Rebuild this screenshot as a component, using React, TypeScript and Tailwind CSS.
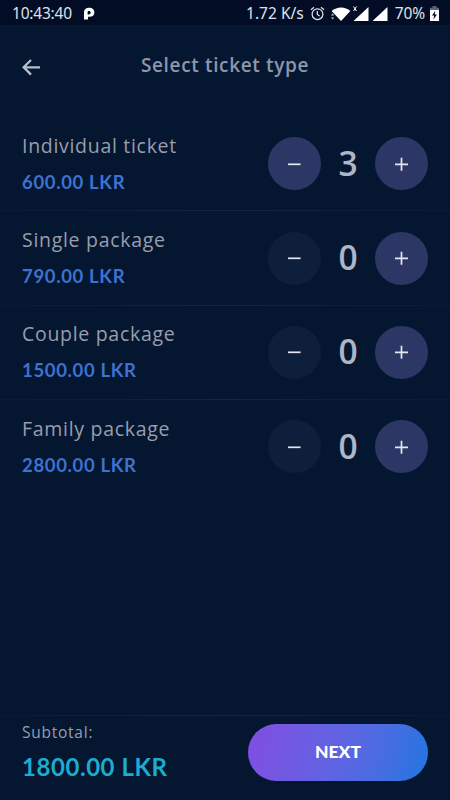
import { useState } from 'react'

interface Ticket {
  name: string
  price: number
  count: number
}

const initialTickets: Ticket[] = [
  { name: 'Individual ticket', price: 600, count: 3 },
  { name: 'Single package', price: 790, count: 0 },
  { name: 'Couple package', price: 1500, count: 0 },
  { name: 'Family package', price: 2800, count: 0 },
]

const formatPrice = (value: number) => `${value.toFixed(2)} LKR`

function StatusBar() {
  return (
    <div className="flex h-[25px] shrink-0 items-center bg-[#020d25] pl-3 pr-[11px] pt-[3px] font-['Noto_Sans',sans-serif] text-[15.5px] leading-none text-[#dfe3ea]">
      <span className="w-[61px] whitespace-nowrap tracking-[-0.2px]">10:43:40</span>
      <svg className="-mt-px ml-[10px] h-[13px] w-[12px]" viewBox="0 0 12 13">
        <path
          d="M1 5.2C1 2.4 3 .8 6 .8 9.4.8 11.4 2.7 11.4 5.4 11.4 8.2 9.4 9.8 6.6 9.8H5V12.6H1V7.6h4.8c1.2 0 1.8-.8 1.8-2S7 3.9 6 3.9 4.6 4.4 4.6 5.2v2.6H1z"
          fill="#fff"
        />
      </svg>
      <span className="ml-auto whitespace-nowrap">1.72 K/s</span>
      <svg className="-mt-0.5 ml-[6px] h-[15px] w-[15px]" viewBox="0 0 15 15" fill="none" stroke="#e4e8ef" strokeWidth="1.2">
        <circle cx="7.5" cy="8.2" r="5.4" />
        <path d="M7.3 5v3.5l2.4 1.4M1 3.7L4 1.2M14 3.7L11 1.2" />
      </svg>
      <svg className="-mt-0.5 ml-[6px] h-[15px] w-[58px]" viewBox="0 0 58 15" fill="#fff">
        <path d="M.6 5C5.9.2 14.3.2 19.4 5L10 15z" />
        <path d="M0 9.4l1.6-2.2 1.6 2.2zM0 11.4h3.2l-1.6 2.2z" fill="#b8bfca" />
        <path d="M37.5 1v14h-15zM56.5 1v14h-15z" />
        <path d="M22.5.5l3 4.5M25.5.5l-3 4.5" stroke="#fff" strokeWidth="1" />
      </svg>
      <span className="ml-[6px] whitespace-nowrap tracking-[-0.1px]">70%</span>
      <svg className="-mt-0.5 ml-[5px] h-[15px] w-[9px]" viewBox="0 0 9 15">
        <path d="M2.5 0h4v1.7H9V4H0V1.7h2.5z" fill="#5c6373" />
        <path d="M0 4h9v11H0z" fill="#fff" />
        <path d="M5.3 4.8L2 9.6h2.1l-.7 4L7 8.5H4.8z" fill="#020d25" />
      </svg>
    </div>
  )
}

function Divider() {
  return <div className="h-px shrink-0 bg-linear-to-r from-[#0a1b36] via-[#14253f] to-[#0a1b36]" />
}

interface CountButtonProps {
  kind: 'minus' | 'plus'
  disabled?: boolean
  onClick: () => void
}

function CountButton({ kind, disabled = false, onClick }: CountButtonProps) {
  return (
    <button
      type="button"
      aria-label={kind}
      disabled={disabled}
      onClick={onClick}
      className={`flex h-[53px] w-[53px] items-center justify-center rounded-full ${
        disabled ? 'bg-[#0e1f3c]' : 'bg-[#2d3765]'
      }`}
    >
      <svg className="h-[14px] w-[14px]" viewBox="0 0 14 14" fill="none" stroke="#e5e7f0" strokeWidth="1.7">
        <path d={kind === 'plus' ? 'M0 7.3h13M6.5.8v13' : 'M0 7.3h12.6'} />
      </svg>
    </button>
  )
}

export default function App() {
  const [tickets, setTickets] = useState(initialTickets)

  const subtotal = tickets.reduce((sum, ticket) => sum + ticket.price * ticket.count, 0)

  const changeCount = (name: string, delta: number) => {
    setTickets(prev =>
      prev.map(ticket => (ticket.name === name ? { ...ticket, count: Math.max(0, ticket.count + delta) } : ticket))
    )
  }

  return (
    <div className="flex h-[800px] w-[450px] flex-col overflow-hidden bg-[#051631] font-['Open_Sans',sans-serif]">
      <StatusBar />

      <header className="grid h-[92px] shrink-0 grid-cols-[1fr_auto_1fr] items-start px-[22px] pt-[28px]">
        <button type="button" aria-label="Back" className="mt-1.5 w-[18px]">
          <svg className="h-[17px] w-[18px]" viewBox="0 0 18 17" fill="none" stroke="#b7bfcc" strokeWidth="2.3">
            <path d="M9 1L1.7 8.3 9 15.6M2 8.3h16" />
          </svg>
        </button>
        <h1 className="whitespace-nowrap text-[19px] font-semibold leading-6 tracking-[0.65px] text-[#8d97ab]">
          Select ticket type
        </h1>
      </header>

      <main className="flex-1">
        {tickets.map((ticket, index) => (
          <section key={ticket.name} className="h-[94.4px]">
            <div className="flex h-[93.4px] items-center justify-between px-[22px]">
              <div>
                <h2 className="whitespace-nowrap text-[19.5px] leading-6 tracking-[0.7px] text-[#989eac]">{ticket.name}</h2>
                <p className="mt-3 whitespace-nowrap font-['Lato',sans-serif] text-[18.5px] font-bold leading-6 tracking-[0.65px] text-[#3d72d0]">
                  {formatPrice(ticket.price)}
                </p>
              </div>
              <div className="flex w-[160px] items-center justify-between">
                <CountButton kind="minus" disabled={ticket.count === 0} onClick={() => changeCount(ticket.name, -1)} />
                <span className="pb-0.5 text-[33.5px] font-semibold leading-10 text-[#adb6c7]">{ticket.count}</span>
                <CountButton kind="plus" onClick={() => changeCount(ticket.name, 1)} />
              </div>
            </div>
            {index < tickets.length - 1 && <Divider />}
          </section>
        ))}
      </main>

      <footer className="h-[85px] shrink-0">
        <Divider />
        <div className="flex items-start justify-between px-[22px] pt-2">
          <div className="-mt-0.5">
            <p className="text-[15.5px] leading-5 tracking-[0.75px] text-[#989eac]">Subtotal:</p>
            <p className="mt-[11px] whitespace-nowrap font-['Lato',sans-serif] text-[24px] font-bold leading-7 tracking-[0.55px] text-[#1daccf]">
              {formatPrice(subtotal)}
            </p>
          </div>
          <button
            type="button"
            className="h-[57px] w-[180px] rounded-full bg-linear-105 from-[#7e4fe2] from-5% to-[#2b73e1] to-92% font-['Lato',sans-serif] text-[17.5px] font-black text-white"
          >
            NEXT
          </button>
        </div>
      </footer>
    </div>
  )
}
